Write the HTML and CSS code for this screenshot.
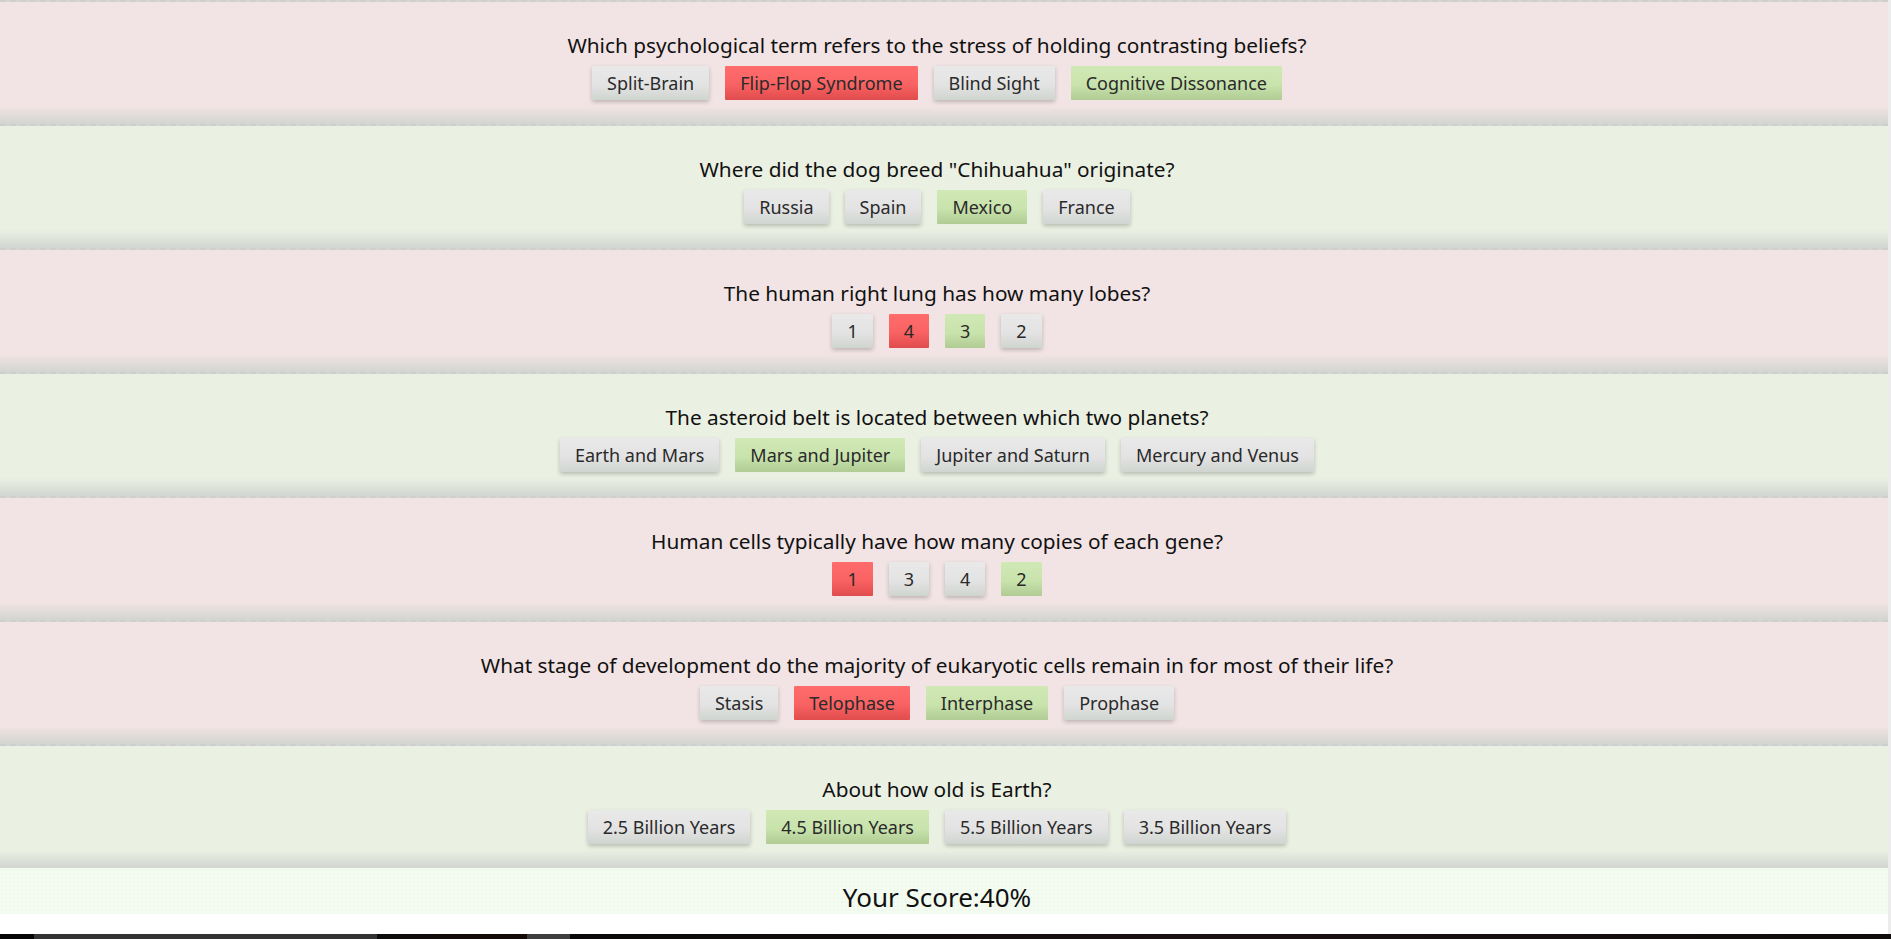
FILE: index.html
```html
<!DOCTYPE html>
<html lang="en">
<head>
<meta charset="utf-8">
<title>Quiz Results</title>
<link rel="stylesheet" href="styles.css">
</head>
<body>
<div class="page">
  <main class="quiz">
    <section class="question wrong">
      <h2 class="q-text">Which psychological term refers to the stress of holding contrasting beliefs?</h2>
      <div class="answers">
        <button class="answer">Split-Brain</button>
        <button class="answer chosen-wrong">Flip-Flop Syndrome</button>
        <button class="answer">Blind Sight</button>
        <button class="answer correct">Cognitive Dissonance</button>
      </div>
    </section>
    <section class="question right">
      <h2 class="q-text">Where did the dog breed "Chihuahua" originate?</h2>
      <div class="answers">
        <button class="answer">Russia</button>
        <button class="answer">Spain</button>
        <button class="answer correct">Mexico</button>
        <button class="answer">France</button>
      </div>
    </section>
    <section class="question wrong">
      <h2 class="q-text">The human right lung has how many lobes?</h2>
      <div class="answers">
        <button class="answer">1</button>
        <button class="answer chosen-wrong">4</button>
        <button class="answer correct">3</button>
        <button class="answer">2</button>
      </div>
    </section>
    <section class="question right">
      <h2 class="q-text">The asteroid belt is located between which two planets?</h2>
      <div class="answers">
        <button class="answer">Earth and Mars</button>
        <button class="answer correct">Mars and Jupiter</button>
        <button class="answer">Jupiter and Saturn</button>
        <button class="answer">Mercury and Venus</button>
      </div>
    </section>
    <section class="question wrong">
      <h2 class="q-text">Human cells typically have how many copies of each gene?</h2>
      <div class="answers">
        <button class="answer chosen-wrong">1</button>
        <button class="answer">3</button>
        <button class="answer">4</button>
        <button class="answer correct">2</button>
      </div>
    </section>
    <section class="question wrong">
      <h2 class="q-text">What stage of development do the majority of eukaryotic cells remain in for most of their life?</h2>
      <div class="answers">
        <button class="answer">Stasis</button>
        <button class="answer chosen-wrong">Telophase</button>
        <button class="answer correct">Interphase</button>
        <button class="answer">Prophase</button>
      </div>
    </section>
    <section class="question right">
      <h2 class="q-text">About how old is Earth?</h2>
      <div class="answers">
        <button class="answer">2.5 Billion Years</button>
        <button class="answer correct">4.5 Billion Years</button>
        <button class="answer">5.5 Billion Years</button>
        <button class="answer">3.5 Billion Years</button>
      </div>
    </section>
    <div class="score">Your Score:40%</div>
  </main>
  <div class="footer-strip"></div>
</div>
</body>
</html>
```
FILE: styles.css
```css
* { box-sizing: border-box; }

html, body {
  margin: 0;
  padding: 0;
  height: 100%;
}

body {
  background: #ececec;
  font-family: "Noto Sans", "DejaVu Sans", sans-serif;
  color: #111;
  overflow: hidden;
}

.page {
  display: flex;
  flex-direction: column;
  height: 939px;
}

.quiz {
  flex: 1;
  margin-right: 3px;
  background: #ffffff;
}

.question {
  height: 124px;
  border-top: 2px dashed #cfcfcf;
  padding: 30px 14px 0 0;
  display: flex;
  flex-direction: column;
  align-items: center;
  gap: 8px;
}

.question.wrong {
  background:
    linear-gradient(to bottom, rgba(200,205,200,0) 0, rgba(200,205,200,0) 104px, #d2d5d0 122px),
    #f2e4e4;
}

.question.right {
  background:
    linear-gradient(to bottom, rgba(200,205,200,0) 0, rgba(200,205,200,0) 104px, #d2d5d0 122px),
    #eaf0e2;
}

.q-text {
  margin: 0;
  font-size: 20.8px;
  line-height: 26px;
  font-weight: 400;
  color: #111;
}

.answers {
  display: flex;
  gap: 16px;
}

.answer {
  height: 34px;
  padding: 0 15px;
  border: none;
  border-radius: 1px;
  font-family: inherit;
  font-size: 18px;
  color: #2a2a2a;
  background: linear-gradient(to bottom, #e9e9e9 0%, #e3e3e3 55%, #d0d5d0 100%);
  box-shadow: 0 2px 4px rgba(0,0,0,0.22);
  cursor: pointer;
}

.answer.chosen-wrong {
  background: linear-gradient(to bottom, #ff6c6c 0%, #f96262 55%, #e04b4b 100%);
  box-shadow: none;
}

.answer.correct {
  background: linear-gradient(to bottom, #d1e9b5 0%, #c9e3ad 55%, #b0cb94 100%);
  box-shadow: none;
}

.score {
  height: 46px;
  display: flex;
  align-items: center;
  justify-content: center;
  padding: 12px 14px 0 0;
  font-size: 26px;
  color: #111;
  background-color: #f4fcf2;
  background-image: radial-gradient(rgba(220,235,220,0.6) 0.6px, transparent 0.8px);
  background-size: 4px 4px;
}

.footer-strip {
  height: 5px;
  flex: none;
  background: linear-gradient(to right, #050505 0, #050505 34px, #333 34px, #333 377px, #0e0c0c 377px, #140a06 527px, #3e3e3e 527px, #3e3e3e 570px, #0a0808 570px, #1a1212 1200px, #100c0c 1891px);
}
```
